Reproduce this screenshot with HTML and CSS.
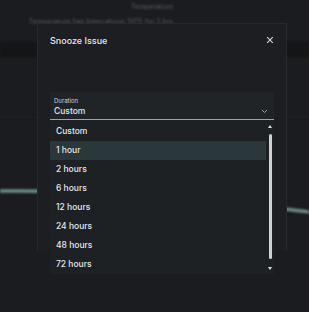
FILE: index.html
```html
<!DOCTYPE html>
<html lang="en">
<head>
  <meta charset="UTF-8" />
  <title>Snooze Issue</title>
  <link rel="stylesheet" href="styles.css">
</head>
<body>
  <div class="page">
    <div class="alert-head">
      <div class="alert-title">Temperature</div>
      <div class="alert-text">Temperature has been above 50°F for 2 hrs</div>
    </div>
    <div class="band"></div>
    <div class="chart">
      <svg width="309" height="200" viewBox="0 0 309 200">
        <line x1="0" y1="60" x2="309" y2="60" stroke="#24272b" stroke-width="1" />
        <path d="M0 134 C 80 133, 160 139, 220 145 S 290 153, 309 155" fill="none" stroke="#6a8e89" stroke-width="3.5" />
        <line x1="0" y1="201" x2="309" y2="201" stroke="#2a2d31" stroke-width="2" />
      </svg>
    </div>
  </div>

  <div class="modal">
    <div class="modal-header">
      <h2>Snooze Issue</h2>
      <svg class="close" width="8" height="8" viewBox="0 0 8 8">
        <path d="M1.2 1.2 L6.8 6.8 M6.8 1.2 L1.2 6.8" stroke="#d0d2d4" stroke-width="1.2" />
      </svg>
    </div>

    <div class="field">
      <div class="field-label">Duration</div>
      <div class="field-value">
        <span>Custom</span>
        <svg width="7" height="5" viewBox="0 0 7 5">
          <path d="M1 1 L3.5 3.5 L6 1" fill="none" stroke="#9aa0a6" stroke-width="1" />
        </svg>
      </div>

      <div class="options">
        <ul>
          <li>Custom</li>
          <li class="active">1 hour</li>
          <li>2 hours</li>
          <li>6 hours</li>
          <li>12 hours</li>
          <li>24 hours</li>
          <li>48 hours</li>
          <li>72 hours</li>
        </ul>
        <div class="scrollbar">
          <span class="arrow up"></span>
          <span class="thumb"></span>
          <span class="arrow down"></span>
        </div>
      </div>
    </div>
  </div>
</body>
</html>
```

FILE: styles.css
```css
body {
  margin: 0;
  width: 309px;
  height: 312px;
  overflow: hidden;
  position: relative;
  background-color: #1a1c1f;
  font-family: Inter, "Noto Sans", sans-serif;
  color: #e6e8ea;
}

.page {
  filter: blur(1px);
}

.alert-head {
  width: 173px;
  padding-top: 2px;
  text-align: right;
  color: #5a5d62;
  font-size: 7px;
}

.alert-title {
  line-height: 9px;
}

.alert-text {
  line-height: 9px;
  margin-top: 6px;
}

.band {
  height: 15px;
  margin-top: 16px;
  background-color: #131517;
}

.chart {
  line-height: 0;
}

.modal {
  position: absolute;
  left: 37px;
  top: 23px;
  width: 224px;
  height: 217px;
  padding: 10px 12px 0 12px;
  background-color: #1c1e21;
  border: 1px solid #26292d;
  border-bottom: none;
}

.modal-header {
  display: flex;
  justify-content: space-between;
  align-items: center;
  height: 12px;
}

.modal-header h2 {
  margin: 0;
  font-size: 9px;
  font-weight: 500;
}

.field {
  position: relative;
  margin-top: 46px;
  padding: 5px 0 0 4px;
  height: 22px;
  background-color: #202427;
  border-bottom: 1px solid #9ea3a8;
}

.field-label {
  font-size: 6px;
  line-height: 8px;
  color: #cfd3d6;
}

.field-value {
  display: flex;
  justify-content: space-between;
  align-items: center;
  padding-right: 6px;
  font-size: 8.5px;
  font-weight: 500;
  line-height: 12px;
}

.options {
  position: absolute;
  left: 0;
  top: 28px;
  width: 224px;
  height: 154px;
  display: flex;
  background-color: #1e2124;
}

.options ul {
  flex: 1;
  margin: 0;
  padding: 1.5px 0 0;
  list-style: none;
}

.options li {
  height: 19.1px;
  line-height: 19.1px;
  padding-left: 6px;
  font-size: 8.5px;
  font-weight: 500;
}

.options li.active {
  background-color: #2a373b;
}

.scrollbar {
  width: 8px;
  display: flex;
  flex-direction: column;
  align-items: center;
  padding: 5px 0 4px;
}

.arrow {
  width: 0;
  height: 0;
  border-left: 2.5px solid transparent;
  border-right: 2.5px solid transparent;
}

.arrow.up {
  border-bottom: 3px solid #e0e0e0;
}

.arrow.down {
  border-top: 3px solid #e0e0e0;
}

.thumb {
  flex: 1;
  width: 3px;
  margin: 6px 0 8px;
  border-radius: 2px;
  background-color: #cfd1d3;
}
```
